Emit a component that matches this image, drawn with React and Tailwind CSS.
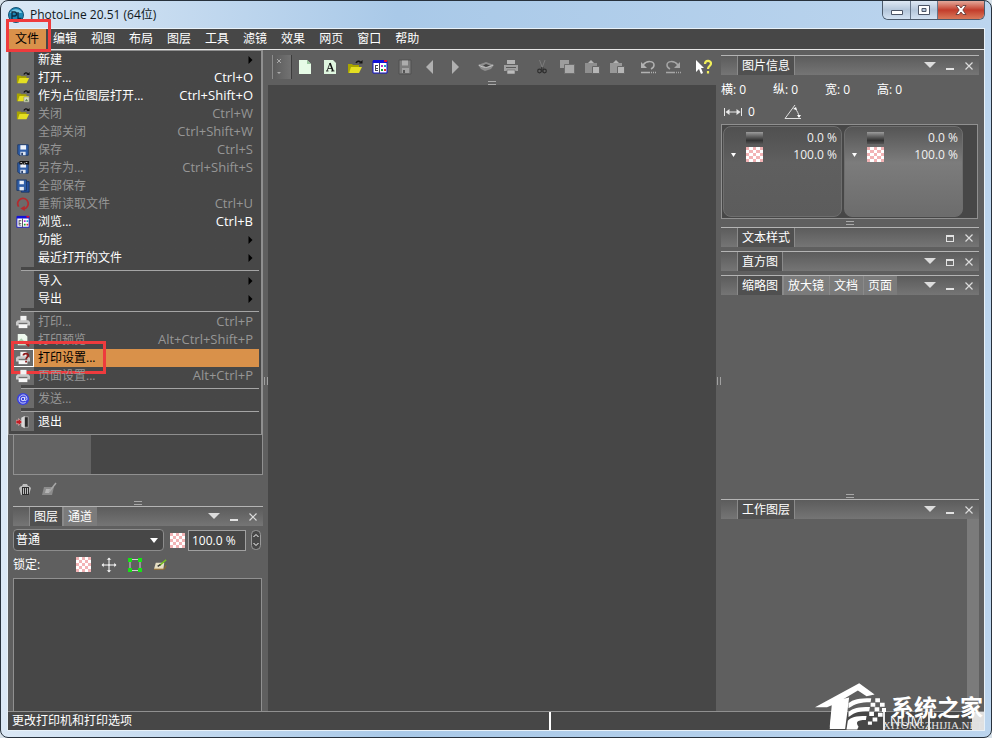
import { useState } from "react";

const MENUS = ["文件", "编辑", "视图", "布局", "图层", "工具", "滤镜", "效果", "网页", "窗口", "帮助"];

const FILE_MENU = [
    { label: "新建", sub: true },
    { label: "打开...", keys: "Ctrl+O", icon: "open" },
    { label: "作为占位图层打开...", keys: "Ctrl+Shift+O", icon: "openLayer" },
    { label: "关闭", keys: "Ctrl+W", icon: "open", off: true },
    { label: "全部关闭", keys: "Ctrl+Shift+W", off: true },
    { label: "保存", keys: "Ctrl+S", icon: "save", off: true },
    { label: "另存为...", keys: "Ctrl+Shift+S", icon: "saveAs", off: true },
    { label: "全部保存", icon: "saveAll", off: true },
    { label: "重新读取文件", keys: "Ctrl+U", icon: "reload", off: true },
    { label: "浏览...", keys: "Ctrl+B", icon: "browse" },
    { label: "功能", sub: true },
    { label: "最近打开的文件", sub: true },
    null,
    { label: "导入", sub: true },
    { label: "导出", sub: true },
    null,
    { label: "打印...", keys: "Ctrl+P", icon: "print", off: true },
    { label: "打印预览", keys: "Alt+Ctrl+Shift+P", icon: "preview", off: true },
    { label: "打印设置...", icon: "printSetup", active: true },
    { label: "页面设置...", keys: "Alt+Ctrl+P", icon: "print", off: true },
    null,
    { label: "发送...", icon: "mail", off: true },
    null,
    { label: "退出", icon: "exit" },
];

const TOOL_GROUPS = [
    ["newDoc", "textDoc", "open", "browse", "saveGray", "prev", "next"],
    ["scan", "printGray"],
    ["cut", "copy", "paste", "pasteAlt"],
    ["undo", "redo"],
    ["help"],
];

const floppy = (
    <>
        <path d="M2 2h12v12H3.500l-1.500-1.500z" fill="#2f5ea8" stroke="#1c3765" />
        <path d="M5 2.500h6.500v5H5z" fill="#eef2fa" />
        <path d="M5 10h6v4H5z" fill="#dfe6f2" />
        <path d="M6 11h2v3H6z" fill="#27406e" />
    </>
);

const printer = (
    <>
        <path d="M5 1h7v6H5z" fill="#f2f2f2" />
        <path d="M2 6h12l2 2v4H0V8z" fill="#c9c9c9" />
        <path d="M3 9h10v1H3z" fill="#555" />
        <path d="M3 11h10v4H3z" fill="#f7f7f7" />
    </>
);

const folder = (
    <>
        <path d="M1 5h4l1 1h6v2H5l-3 6H1z" fill="#a8a400" />
        <path d="M4 8h11l-3 6H2z" fill="#e4df22" />
        <path d="M9 4c1-2 3-2.500 4.500-.8" fill="none" stroke="#111" strokeWidth="1.500" />
        <path d="M12 4.500h3.500V1z" fill="#111" />
    </>
);

const browser = (
    <>
        <path d="M1 2h14v12H1z" fill="#fff" stroke="#1010c8" />
        <path d="M1 1h14v3H1z" fill="#1010d8" />
        <path d="M12 1h3v2h-3z" fill="#e01030" />
        <path d="M7 4h1v10H7zM3 6h1v6H3zM4 6h2v1H4zM4 9h2v1H4zM4 11h2v1H4z" fill="#445" />
        <path d="M9 6h2v2H9z" fill="#b030d0" />
        <path d="M12 6h2v2h-2z" fill="#18a0c0" />
        <path d="M9 10h2v2H9z" fill="#10a030" />
        <path d="M12 10h2v2h-2z" fill="#e03030" />
    </>
);

const ICONS = {
    open: folder,
    openLayer: (
        <>
            {folder}
            <path d="M9 9h6v6H9z" fill="#d8dcc0" stroke="#777" strokeWidth=".5" />
            <path d="M10 14l2-3 2 3z" fill="#6b8a5a" />
        </>
    ),
    save: floppy,
    saveAs: (
        <>
            {floppy}
            <path d="M4 0h11v4H4z" fill="#111" />
            <path d="M5 1h2v1H5zM9 2h1v1H9zM11 1h2v1h-2zM7 3h1v1H7z" fill="#eee" />
        </>
    ),
    saveAll: (
        <>
            <path d="M6 3h9v12H6z" fill="#2450a0" stroke="#16305f" />
            <path d="M1 1h11v12H1z" fill="#2f5ea8" stroke="#1c3765" />
            <path d="M4 2h5v4H4z" fill="#eef2fa" />
            <path d="M4 9h5v4H4z" fill="#dfe6f2" />
        </>
    ),
    reload: (
        <>
            <path d="M3 11A6 6 0 1 1 9 13.500" fill="none" stroke="#b52a2e" strokeWidth="2" />
            <path d="M10 10v6L5 13z" fill="#b52a2e" />
        </>
    ),
    browse: browser,
    print: printer,
    preview: (
        <>
            <path d="M2 1h8l3 3v10H2z" fill="#eef8ee" />
            <path d="M3 9h9v4H3z" fill="#7fb58a" />
            <path d="M3 9l3-3 3 3z" fill="#a9cfae" />
            <path d="M11 11l4 4" stroke="#a82020" strokeWidth="2.500" />
        </>
    ),
    printSetup: (
        <>
            {printer}
            <path d="M8.500 5C8.500 2.500 14 2 14 5c0 2-2.500 2-2.500 4.500M11.500 11v2" fill="none" stroke="#8e1616" strokeWidth="2" />
        </>
    ),
    mail: (
        <>
            <circle cx="8" cy="8" r="7" fill="#3a42dc" />
            <circle cx="8" cy="8" r="2" fill="none" stroke="#dfe3ff" strokeWidth="1.200" />
            <path d="M10.200 5.500L9.800 9c.2 1.500 2.700 1 2.700-1.500C12.500 2 4 2 3.500 8c0 5 5 5.500 7.500 3.800" fill="none" stroke="#dfe3ff" strokeWidth="1.100" />
        </>
    ),
    exit: (
        <>
            <path d="M9 2h5v12H9z" fill="#2b2b2b" stroke="#aaa" />
            <path d="M6 3l4-2v14l-4-2z" fill="#d8d8d8" />
            <path d="M0 6h3V4l4 4-4 4v-2H0z" fill="#c21d24" stroke="#e8d0d0" strokeWidth=".6" />
        </>
    ),
    newDoc: (
        <>
            <path d="M2 1h8l4 4v10H2z" fill="#e6fbe6" />
            <path d="M10 1v4h4z" fill="#9cc8a0" />
        </>
    ),
    textDoc: (
        <>
            <path d="M2 1h9l3 3v11H2z" fill="#dff6df" />
            <path d="M5 12L8 4" fill="none" stroke="#111" strokeWidth=".8" />
            <path d="M8 4l3 8" fill="none" stroke="#111" strokeWidth="1.600" />
            <path d="M6 9.500h4M4 12h2.500M9 12h3.500" fill="none" stroke="#111" strokeWidth=".8" />
        </>
    ),
    saveGray: (
        <>
            <path d="M2 1h12v14H2z" fill="#7d7d7d" stroke="#505050" />
            <path d="M5 1.500h6v5H5z" fill="#adadad" />
            <path d="M5 9h7v5H5z" fill="#a2a2a2" />
            <path d="M6 11h2v3H6z" fill="#555" />
        </>
    ),
    prev: <path d="M11 1v14L4 8z" fill="#b0b0b0" />,
    next: <path d="M5 1v14l7-7z" fill="#b0b0b0" />,
    scan: (
        <>
            <path d="M0 6l8-3 8 3-3 4-6 2-4-2z" fill="#8e8e8e" />
            <path d="M1 6c4 3 9 3 14 0" fill="none" stroke="#c8c8c8" />
            <path d="M5 6.500l3-1.500 4 1.500-4 1.500z" fill="#444" />
        </>
    ),
    printGray: (
        <>
            <path d="M4 1h8v4H4z" fill="#b2b2b2" />
            <path d="M1 6h14v6H1z" fill="#a0a0a0" />
            <path d="M3 8h10v1H3z" fill="#5a5a5a" />
            <path d="M4 11h8v4H4z" fill="#bcbcbc" stroke="#666" strokeWidth=".6" />
        </>
    ),
    cut: (
        <>
            <path d="M5.500 1l3 8M11 1L8 9" stroke="#7c7c7c" fill="none" />
            <circle cx="5.500" cy="12" r="1.800" fill="none" stroke="#2e2e2e" strokeWidth="1.200" />
            <circle cx="10.500" cy="12" r="1.800" fill="none" stroke="#2e2e2e" strokeWidth="1.200" />
            <path d="M7.500 8v5M9 8v5" stroke="#2e2e2e" strokeWidth=".8" />
        </>
    ),
    copy: (
        <>
            <path d="M1 1h9v8H1z" fill="#9d9d9d" />
            <path d="M5.500 5.500h10v9h-10z" fill="#a9a9a9" stroke="#6d6d6d" />
        </>
    ),
    paste: (
        <>
            <path d="M1 4h12v10H1z" fill="#8f8f8f" />
            <path d="M4 4l3-3 3 3z" fill="#b4b4b4" />
            <path d="M8.500 7.500h7v7h-7z" fill="#b6b6b6" stroke="#666" />
        </>
    ),
    pasteAlt: (
        <>
            <path d="M1 4h12v10H1z" fill="#989898" />
            <path d="M4 4l3-3 3 3z" fill="#b4b4b4" />
            <path d="M8.500 7.500h7v7h-7z" fill="#b6b6b6" stroke="#666" />
        </>
    ),
    undo: (
        <>
            <path d="M3 6c4-5 11-4 11 0 0 2-1 3-3 4" fill="none" stroke="#b2b2b2" strokeWidth="1.500" />
            <path d="M1 3v6h6z" fill="#b2b2b2" />
            <path d="M1 13.500h9M11 13.500h1M13 13.500h1M15 13.500h1" stroke="#b2b2b2" strokeWidth="1.500" />
        </>
    ),
    redo: (
        <>
            <path d="M13 6C9 1 2 2 2 6c0 2 1 3 3 4" fill="none" stroke="#a6a6a6" strokeWidth="1.500" />
            <path d="M15 3v6H9z" fill="#a6a6a6" />
            <path d="M1 13.500h9M11 13.500h1M13 13.500h1M15 13.500h1" stroke="#a6a6a6" strokeWidth="1.500" />
        </>
    ),
    help: (
        <>
            <path d="M0 1l8 8H5l2 5-2 1-2-5-3 3z" fill="#fff" />
            <path d="M9 5c0-4 6-4 6-.5C15 7 12 7 12 10M12 12v2.500" fill="none" stroke="#f0ee5a" strokeWidth="2.200" />
        </>
    ),
    trash: (
        <>
            <path d="M2 7l2-2h1l1-2h4l1 2h1l2 2-2 7H4z" fill="#bdbdbd" />
            <path d="M5 7h1v6H5zM7 7h1v6H7zM9 7h1v6H9zM11 7h1v6h-1zM5 6h7v1H5zM5 13h7v1H5z" fill="#2e2e2e" />
        </>
    ),
    brushGray: (
        <>
            <path d="M3 6h10l-2 8H1z" fill="#8c8c8c" />
            <path d="M5 8h4l-1 4H4z" fill="#b4b4b4" />
            <path d="M8 11l7-9" stroke="#a8a8a8" strokeWidth="1.500" />
        </>
    ),
    brush: (
        <>
            <path d="M3 6h9l-1 7H1z" fill="#e6dfc4" />
            <path d="M1 13h11l2-4" fill="none" stroke="#9a6a22" />
            <path d="M7 9l7-6" stroke="#77c020" strokeWidth="1.600" />
            <path d="M5 10l3-2" stroke="#333" strokeWidth="1.600" />
        </>
    ),
    move: <path d="M8 0l3 3H9v4h4V5l3 3-3 3V9H9v4h2l-3 3-3-3h2V9H3v2L0 8l3-3v2h4V3H5z" fill="#e4e4e4" stroke="#5f5f5f" strokeWidth=".8" />,
    frame: (
        <>
            <path d="M3 2.500h10v11H3z" fill="none" stroke="#d0d0d0" />
            <path d="M1 1h4v4H1zM11 1h4v4h-4zM1 11h4v4H1zM11 11h4v4h-4z" fill="#14e314" />
        </>
    ),
};

function Icon({ name, className = "size-4" }) {
    return <svg viewBox="0 0 16 16" className={`${className} shrink-0`} aria-hidden="true">{ICONS[name]}</svg>;
}

function Checker({ className = "size-4" }) {
    return (
        <svg viewBox="0 0 5 5" className={`${className} shrink-0`} preserveAspectRatio="none" shapeRendering="crispEdges" aria-hidden="true">
            <path d="M0 0h5v5H0z" fill="#fff" />
            <path d="M0 0h1v1H0zM2 0h1v1H2zM4 0h1v1H4zM1 1h1v1H1zM3 1h1v1H3zM0 2h1v1H0zM2 2h1v1H2zM4 2h1v1H4zM1 3h1v1H1zM3 3h1v1H3zM0 4h1v1H0zM2 4h1v1H2zM4 4h1v1H4z" fill="#f2b3b5" />
        </svg>
    );
}

function Grip() {
    return <div className="mx-auto h-1 w-2 shrink-0 border-y border-[#a8a8a8]" />;
}

function Splitter() {
    return (
        <div className="flex w-[5px] shrink-0 items-center justify-center bg-[#5f5f5f]">
            <div className="h-2 w-1 border-x border-[#a0a0a0]" />
        </div>
    );
}

function PanelHeader({ tabs, more = true, closed = false }) {
    return (
        <div className="flex h-5 shrink-0 items-stretch border-t border-[#b4b4b4] bg-linear-to-b from-[#5c5c5c] to-[#757575]">
            <div className="w-4" />
            {tabs.map((tab, i) => (
                <button
                    key={tab}
                    type="button"
                    className={`flex items-center border-l border-r border-l-[#8a8a8a] pr-1 pl-1 leading-4 text-white ${i === 0 ? "border-r-[#8a8a8a] bg-[#505050]" : "border-r-transparent bg-[#7b7b7b]"}`}
                >
                    {tab}
                </button>
            ))}
            <div className="ml-auto flex items-center gap-[10px] pr-[5px]">
                {more && (
                    <button type="button" aria-label="选项">
                        <svg viewBox="0 0 12 6" className="mb-[2px] h-[6px] w-3"><path d="M0 0h12L6 6z" fill="#dcdcdc" /></svg>
                    </button>
                )}
                <button type="button" aria-label={closed ? "展开" : "折叠"}>
                    <svg viewBox="0 0 8 8" className="size-2" shapeRendering="crispEdges">
                        <path d={closed ? "M0 1h8v7H0zM1 3v4h6V3z" : "M0 6h8v2H0z"} fill="#e2e2e2" fillRule="evenodd" />
                    </svg>
                </button>
                <button type="button" aria-label="关闭面板">
                    <svg viewBox="0 0 10 10" className="size-[10px]"><path d="M1.500 1.500l7 7M8.500 1.500l-7 7" stroke="#dcdcdc" strokeWidth="1.200" /></svg>
                </button>
            </div>
        </div>
    );
}

function FileMenu() {
    return (
        <div className="absolute top-full left-0 z-20 mt-px w-[254px] border border-[#8f8f8f] bg-[#474747] px-[2px] pb-[3px]">
            <div className="bg-linear-to-r from-[#6b6b6b] from-[23px] to-[#474747] to-[23px]">
                {FILE_MENU.map((item, i) =>
                    item ? (
                        <button
                            key={i}
                            type="button"
                            aria-disabled={item.off}
                            className={`relative flex h-[18px] w-full items-center text-left whitespace-nowrap ${item.off ? "text-[#969696]" : item.active ? "text-black" : "text-white"}`}
                        >
                            <span className={`flex h-full w-[23px] items-center justify-center ${item.active ? "border border-white" : ""}`}>
                                {item.icon && <Icon name={item.icon} className="size-[14px]" />}
                            </span>
                            <span className={`flex h-full flex-1 items-center justify-between pr-[6px] pl-1 ${item.active ? "bg-[#d9914a]" : ""}`}>
                                {item.label}
                                {item.keys && <span className="text-[13px]">{item.keys}</span>}
                                {item.sub && <svg viewBox="0 0 4 8" className="h-2 w-[5px]"><path d="M0 0l4 4-4 4z" fill="#000" /></svg>}
                            </span>
                            {item.active && <span className="absolute -top-2 left-0 h-[33px] w-[95px] border-3 border-[#ee3b3d]" />}
                        </button>
                    ) : (
                        <div key={i} className="h-[5px] pl-[10px]">
                            <div className="h-1 border-b border-[#a5a5a5] bg-[#474747]" />
                        </div>
                    )
                )}
            </div>
        </div>
    );
}

function TitleBar() {
    return (
        <header className="flex h-[27px] shrink-0 items-start pl-px">
            <div className="flex h-full items-center gap-[6px]">
                <svg viewBox="0 0 16 16" className="size-4">
                    <circle cx="8" cy="8" r="7.500" fill="#1c86b4" stroke="#155273" />
                    <path d="M2 6a6.500 6 0 0 1 12 0z" fill="#7ac8e4" />
                    <path d="M4 12V5h2.500a2 2 0 0 1 0 4H4M10 5v6.500h3.500" fill="none" stroke="#0b2b42" strokeWidth="1.300" />
                </svg>
                <h1 className="text-xs text-[#101820]">PhotoLine 20.51 (64位)</h1>
            </div>
            <div className="ml-auto flex h-[19px] overflow-hidden rounded-b-md border border-t-0 border-[#4c5a6b]">
                <button type="button" aria-label="最小化" className="flex w-7 items-center justify-center border-r border-[#66768a] bg-linear-to-b from-[#dfe9f4] via-[#b4c6da] via-50% to-[#d3e2f2]">
                    <svg viewBox="0 0 12 5" className="mt-1 h-[5px] w-3"><path d="M.5.5h11v4H.5z" fill="#fff" stroke="#4c5566" /></svg>
                </button>
                <button type="button" aria-label="最大化" className="flex w-[27px] items-center justify-center border-r border-[#66768a] bg-linear-to-b from-[#dfe9f4] via-[#b4c6da] via-50% to-[#d3e2f2]">
                    <svg viewBox="0 0 12 10" className="h-[10px] w-3"><path d="M.5.5h11v9H.5zM4 3.500v3h4v-3z" fill="#fff" stroke="#4c5566" fillRule="evenodd" /></svg>
                </button>
                <button type="button" aria-label="关闭" className="flex w-[46px] items-center justify-center bg-linear-to-b from-[#e3a89b] via-[#c23b2b] via-50% to-[#d9785a]">
                    <svg viewBox="0 0 12 10" className="h-[10px] w-3"><path d="M1 .5h3l2 2.500L8 .5h3L7.800 5 11 9.500H8L6 7 4 9.500H1L4.200 5z" fill="#fff" stroke="#5b3434" strokeWidth=".8" /></svg>
                </button>
            </div>
        </header>
    );
}

function Toolbar() {
    return (
        <div className="flex h-[35px] shrink-0 flex-col bg-[#5f5f5f]">
            <div className="flex flex-1 items-center gap-[6px] pt-[3px] pl-1">
                <div className="-mr-[6px] flex h-6 w-5 shrink-0 flex-col justify-between border-x border-l-[#8c8c8c] border-r-[#3c3c3c] bg-linear-to-r from-[#5c5c5c] to-[#727272] py-1 pl-1">
                    <svg viewBox="0 0 4 4" className="size-1"><path d="M0 0l4 4M4 0L0 4" stroke="#aaa" /></svg>
                    <svg viewBox="0 0 4 4" className="size-1"><path d="M0 1h4L2 3z" fill="#aaa" /></svg>
                </div>
                {TOOL_GROUPS.map((group, i) => (
                    <div key={i} className="flex">
                        {group.map((name) => (
                            <button key={name} type="button" aria-label={name} className="flex w-[25px] justify-center">
                                <Icon name={name} />
                            </button>
                        ))}
                    </div>
                ))}
            </div>
            <Grip />
        </div>
    );
}

function LayersPanel() {
    const [opacity, setOpacity] = useState("100.0 %");

    return (
        <aside className="flex w-[255px] shrink-0 flex-col bg-[#5f5f5f] pl-[5px]">
            <div className="flex flex-1 border border-[#909090] bg-[#474747]">
                <div className="w-[77px] bg-[#636363]" />
            </div>
            <div className="flex h-[26px] items-center gap-2 pt-[2px] pl-1">
                <button type="button" aria-label="删除"><Icon name="trash" /></button>
                <button type="button" aria-label="编辑画笔"><Icon name="brushGray" /></button>
            </div>
            <Grip />
            <div className="h-px" />
            <PanelHeader tabs={["图层", "通道"]} />
            <div className="flex items-center pt-[3px] pr-[2px]">
                <div className="relative w-[151px]">
                    <select aria-label="混合模式" className="h-[22px] w-full appearance-none rounded border border-[#8c8c8c] bg-[#474747] pl-[2px] text-xs leading-5 text-white">
                        <option>普通</option>
                    </select>
                    <svg viewBox="0 0 8 5" className="pointer-events-none absolute top-[9px] right-[6px] h-[5px] w-2"><path d="M0 0h8L4 5z" fill="#fff" /></svg>
                </div>
                <Checker className="ml-[6px] size-[15px]" />
                <input
                    aria-label="不透明度"
                    value={opacity}
                    onChange={(e) => setOpacity(e.target.value)}
                    className="ml-[3px] h-[21px] w-[58px] border border-[#a0a0a0] bg-[#474747] pl-[3px] text-xs text-white"
                />
                <svg viewBox="0 0 10 20" className="ml-auto h-5 w-[10px]">
                    <rect x=".5" y=".5" width="9" height="19" rx="4" fill="#474747" stroke="#999" />
                    <path d="M2.500 7L5 4.500 7.500 7M2.500 13L5 15.500 7.500 13" fill="none" stroke="#fff" />
                </svg>
            </div>
            <div className="flex h-[27px] items-center">
                <span className="w-[63px] text-white">锁定:</span>
                <div className="flex items-center gap-[10px]">
                    <button type="button" aria-label="锁定透明度"><Checker className="size-[15px]" /></button>
                    <button type="button" aria-label="锁定位置"><Icon name="move" /></button>
                    <button type="button" aria-label="锁定边框"><Icon name="frame" /></button>
                    <button type="button" aria-label="锁定绘制"><Icon name="brush" className="size-[15px]" /></button>
                </div>
            </div>
            <div className="mr-px h-[133px] border border-b-0 border-[#909090] bg-[#474747]" />
        </aside>
    );
}

function Swatch({ lit }) {
    return (
        <div className={`h-full w-[119px] rounded-lg border border-[#6e6e6e] pt-[2px] pr-1 text-[#f0f0f0] ${lit ? "bg-linear-to-b from-[#555] from-0% via-[#7c7c7c] via-40% to-[#6c6c6c]" : "bg-linear-to-b from-[#505050] via-[#5f5f5f] via-40% to-[#5c5c5c]"}`}>
            <div className="flex h-[17px] items-center justify-between pl-[22px]">
                <div className="h-3 w-[17px] bg-linear-to-b from-[#9c9c9c] via-[#333] via-70% to-[#555]" />
                <span>0.0 %</span>
            </div>
            <div className="flex h-[17px] items-center pl-[7px]">
                <svg viewBox="0 0 5 4" className="h-1 w-[5px]"><path d="M0 0h5L2.500 4z" fill="#fff" /></svg>
                <Checker className="ml-[10px] h-[15px] w-[17px]" />
                <span className="ml-auto">100.0 %</span>
            </div>
        </div>
    );
}

function InfoPanel() {
    return (
        <aside className="flex min-h-0 w-[263px] shrink-0 flex-col bg-[#5f5f5f] pt-[5px] pr-[5px]">
            <PanelHeader tabs={["图片信息"]} />
            <div className="mt-[6px] flex h-[18px] items-center text-white">
                {["横", "纵", "宽", "高"].map((name) => (
                    <span key={name} className="w-[52px]">{name}: 0</span>
                ))}
            </div>
            <div className="mt-1 flex h-[18px] items-center pl-[3px] text-white">
                <svg viewBox="0 0 18 8" className="h-2 w-[18px]">
                    <path d="M.5 0v8M17.500 0v8M3 4h12" stroke="#e8e8e8" fill="none" />
                    <path d="M1.500 4l4-3v6zM16.500 4l-4-3v6z" fill="#e8e8e8" />
                </svg>
                <span className="w-[42px] pl-[6px]">0</span>
                <svg viewBox="0 0 18 14" className="h-[14px] w-[18px]">
                    <path d="M11 0L1 13.500h16M11 3c2 3 4 6 4 9" stroke="#e0e0e0" fill="none" />
                    <path d="M9 4l3-2 1 3zM13 10h4l-2 3z" fill="#fff" />
                </svg>
            </div>
            <div className="mt-[3px] mr-px flex h-[95px] shrink-0 gap-[2px] border border-[#909090] bg-[#474747] px-px py-px">
                <Swatch />
                <Swatch lit />
            </div>
            <div className="flex h-2 shrink-0 items-center"><Grip /></div>
            <div className="flex flex-col gap-1">
                <PanelHeader tabs={["文本样式"]} more={false} closed />
                <PanelHeader tabs={["直方图"]} closed />
                <PanelHeader tabs={["缩略图", "放大镜", "文档", "页面"]} />
            </div>
            <div className="flex-1" />
            <Grip />
            <div className="h-px" />
            <PanelHeader tabs={["工作图层"]} />
            <div className="flex h-48 justify-end">
                <div className="w-3 bg-[#7b7b7b]" />
            </div>
        </aside>
    );
}

function Watermark() {
    return (
        <div className="absolute right-2 bottom-[6px] z-30 flex items-end text-white">
            <svg viewBox="50 68 215 142" className="h-12 w-[72px]" fill="#fff">
                <path d="M50 140L182 68l46 34-24 5-26-17-54 32-10 2-8 74H94l6-64-14 6z" />
                <path d="M94 205l10-84 48-10-12 94z" />
                <path d="M150 128c14-12 30-15 68-15l-2 12c-32 0-44 4-66 18zM150 154c14-12 28-15 64-15l-2 12c-32 0-42 4-62 18zM148 180c10-10 22-14 56-14l-2 12c-30 0-30 8-22 20l-4 8h-32z" />
                <path d="M230 113h14v12h-14zM216 126h14v12h-14zM244 126h14v12h-14zM228 140h14v12h-14zM250 142h12v12h-12zM212 154h14v12h-14zM238 156h14v12h-14zM222 170h14v12h-14zM208 182h12v10h-12z" />
            </svg>
            <div className="-ml-1 flex flex-col items-end">
                <span className="text-[23px] leading-6 font-bold">系统之家</span>
                <span className="font-['Liberation_Serif',serif] text-[11px] leading-3 text-[#e4e4e4]">XITONGZHIJIA.NET</span>
            </div>
        </div>
    );
}

export default function App() {
    const [menu, setMenu] = useState("文件");

    return (
        <div className="h-screen bg-[#d8e2ea] font-['Open_Sans','Noto_Sans_CJK_SC',sans-serif] text-xs">
            <div className="relative flex h-full flex-col rounded-lg border border-[#27313c] bg-linear-to-r from-[#dbe8f5] via-[#a9c9e8] via-40% to-[#bcd5ee] px-[6px] pb-[6px]">
                <TitleBar />
                <div className="flex min-h-0 flex-1 flex-col border border-[#e8f1f8] bg-[#474747]">
                    <nav className="relative flex h-5 shrink-0">
                        {MENUS.map((name) => (
                            <button
                                key={name}
                                type="button"
                                onClick={() => setMenu(menu === name ? "" : name)}
                                className={`relative px-[7px] leading-5 ${menu === name ? "bg-[#d9914a] text-black" : "text-white"}`}
                            >
                                {name}
                                {name === "文件" && <span className="absolute -top-[10px] -left-[2px] z-30 h-[33px] w-[45px] border-3 border-[#ee3b3d]" />}
                            </button>
                        ))}
                        {menu === "文件" && <FileMenu />}
                    </nav>
                    <main className="flex min-h-0 flex-1 border-t border-b border-t-[#e6e6e6] border-b-[#909090]">
                        <LayersPanel />
                        <Splitter />
                        <section className="flex min-w-0 flex-1 flex-col bg-[#474747]">
                            <Toolbar />
                        </section>
                        <Splitter />
                        <InfoPanel />
                    </main>
                    <footer className="flex h-[18px] shrink-0 items-stretch text-white">
                        <span className="flex-1 pl-1 leading-[18px]">更改打印机和打印选项</span>
                        <div className="flex w-[435px] border-l-2 border-white">
                            <span className="ml-auto border-x-2 border-[#e8e8e8] px-[5px] text-sm leading-[18px]">NUM</span>
                            <div className="ml-[42px] w-3 bg-[#e0e0e0]" />
                        </div>
                    </footer>
                </div>
                <Watermark />
            </div>
        </div>
    );
}
